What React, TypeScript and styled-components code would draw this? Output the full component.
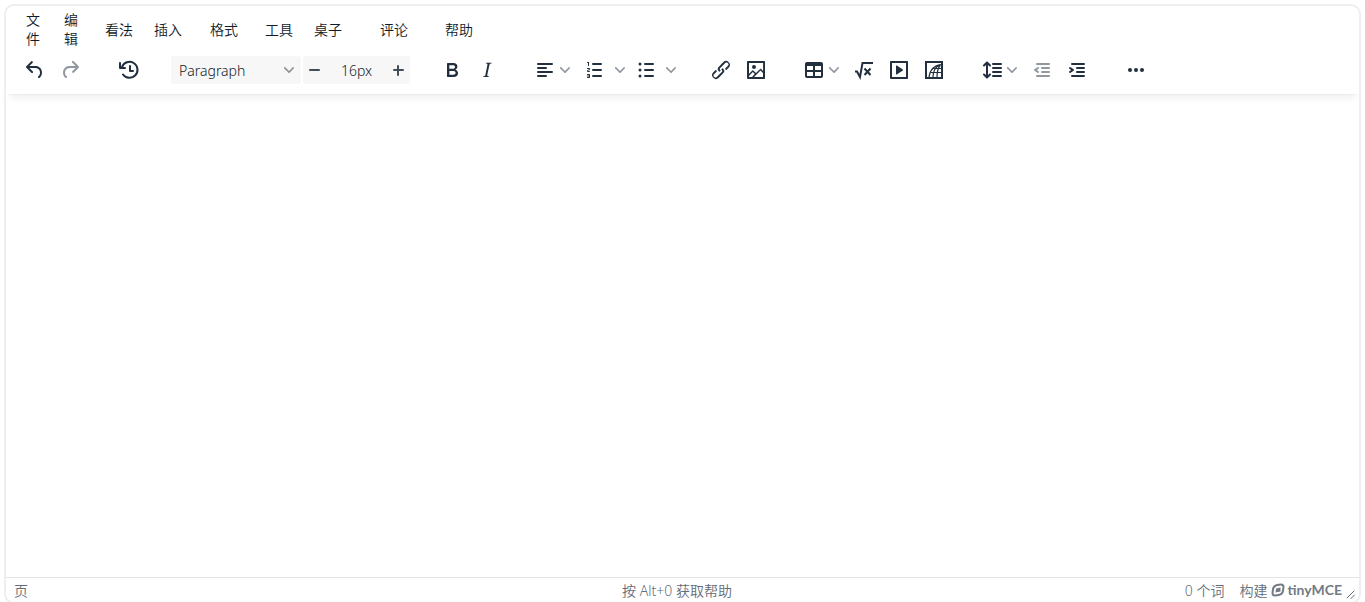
import React from "react";
import styled, { createGlobalStyle, css } from "styled-components";

const INK = "#222f3e";
const MUTED = "#636d78";

const GlobalStyle = createGlobalStyle`
  * { box-sizing: border-box; }
  body {
    margin: 0;
    background: #fff;
    color: ${INK};
    font: 350 14px/19px "Noto Sans", "Noto Sans CJK SC", sans-serif;
    overflow: hidden;
  }
`;

const Editor = styled.main`
  display: flex;
  flex-direction: column;
  height: calc(100vh - 2px);
  margin: 4px 4px 0;
  border: 2px solid #eee;
  border-radius: 10px;
  background: #fff;
  overflow: hidden;
`;

const Header = styled.header`
  position: relative;
  box-shadow: 0 2px 2px -2px rgba(34, 47, 62, 0.1), 0 8px 8px -4px rgba(34, 47, 62, 0.07);
`;

const MenuBar = styled.nav`
  display: flex;
  gap: 1px;
  padding: 4px 12px;
`;

const buttonReset = css`
  border: 0;
  border-radius: 3px;
  background: transparent;
  color: ${INK};
  font: inherit;
  cursor: pointer;
`;

const MenuButton = styled.button<{ $width: number }>`
  ${buttonReset}
  flex: none;
  width: ${(p) => p.$width}px;
  padding: 0 8px;
  color: #111c28;
  text-align: left;
`;

const ToolBar = styled.div`
  display: flex;
  gap: 25px;
  padding: 4px 12px 10px;
`;

const Group = styled.div<{ $gap?: number }>`
  display: flex;
  gap: ${(p) => p.$gap ?? 1}px;
`;

const ToolButton = styled.button`
  ${buttonReset}
  display: flex;
  align-items: center;
  justify-content: center;
  width: 34px;
  height: 28px;
  padding: 0;

  &:disabled { color: rgba(34, 47, 62, 0.5); cursor: default; }
`;

const MenuToolButton = styled(ToolButton)`
  justify-content: flex-start;
  gap: 3px;
  width: 48px;
  padding-left: 4px;
`;

const Split = styled.div`
  display: flex;
`;

const SplitArrow = styled(ToolButton)`
  width: 16px;
`;

const SelectBox = styled.div`
  position: relative;
  width: 130px;
  height: 28px;
  border-radius: 3px;
  background: #f7f7f7;

  svg { position: absolute; right: 7px; top: 9px; pointer-events: none; }
`;

const fieldText = css`
  height: 28px;
  border: 0;
  background: transparent;
  color: #111c28;
  font: inherit;
`;

const BlockSelect = styled.select`
  ${fieldText}
  appearance: none;
  width: 100%;
  padding: 1px 20px 0 8px;
`;

const NumberBox = styled.div`
  display: flex;
  align-items: center;
  width: 107px;
  height: 28px;
  border-radius: 3px;
  background: #f7f7f7;
`;

const StepButton = styled(ToolButton)`
  width: 23px;
  color: rgba(34, 47, 62, 0.85);
`;

const SizeInput = styled.input`
  ${fieldText}
  flex: 1;
  min-width: 0;
  padding: 1px 0 0;
  text-align: center;
`;

const EditArea = styled.div`
  flex: 1;
  padding: 16px;
  outline: none;
`;

const StatusBar = styled.footer`
  display: flex;
  align-items: center;
  height: 25px;
  padding: 1px 3px 0 8px;
  border-top: 1px solid #e3e3e3;
  color: ${MUTED};
`;

const StatusSide = styled.div<{ $end?: boolean }>`
  display: flex;
  flex: 1;
  align-items: center;
  justify-content: ${(p) => (p.$end ? "flex-end" : "flex-start")};
  gap: 15px;
`;

const HelpText = styled.span`
  padding-right: 16px;
`;

const Brand = styled.a`
  display: flex;
  align-items: center;
  gap: 4px;
  color: ${MUTED};
  text-decoration: none;
`;

const BrandMark = styled.span`
  display: flex;
  align-items: center;
  gap: 2px;
  height: 19px;
  padding-bottom: 2px;
  color: #737b84;
  font: 700 14px/16px Lato, sans-serif;
`;

const Tail = styled.div`
  display: flex;
  gap: 4px;
`;

const Grip = styled.svg`
  align-self: flex-end;
`;

const Chevron = () => (
  <svg width="10" height="10" fill={INK} fillOpacity=".5" aria-hidden="true">
    <path d="M8.7 2.2c.3-.3.8-.3 1 0 .4.4.4.9 0 1.2L5.7 7.8c-.3.3-.9.3-1.2 0L.2 3.4a.8.8 0 0 1 0-1.2c.3-.3.8-.3 1.1 0L5 6l3.7-3.8Z" />
  </svg>
);

const icons: Record<string, React.ReactNode> = {
  undo: <path d="M6.4 8H12c3.7 0 6.2 2 6.8 5.1.6 2.7-.4 5.6-2.3 6.8a1 1 0 0 1-1-1.8c1.1-.6 1.8-2.7 1.4-4.6-.5-2.1-2.1-3.5-4.9-3.5H6.4l3.3 3.3a1 1 0 1 1-1.4 1.4l-5-5a1 1 0 0 1 0-1.4l5-5a1 1 0 0 1 1.4 1.4L6.4 8Z" />,
  redo: <path d="M17.6 10H12c-2.8 0-4.4 1.4-4.9 3.5-.4 2 .3 4 1.4 4.6a1 1 0 1 1-1 1.8c-2-1.2-2.9-4.1-2.3-6.8.6-3 3-5.1 6.8-5.1h5.6l-3.3-3.3a1 1 0 1 1 1.4-1.4l5 5a1 1 0 0 1 0 1.4l-5 5a1 1 0 0 1-1.4-1.4l3.3-3.3Z" />,
  history: (
    <g fill="none" stroke="currentColor" strokeWidth="2" strokeLinecap="round" strokeLinejoin="round">
      <path d="M6 16.500A8 8 0 1 0 5 9M3 5v5h5M13 8v5h3" />
    </g>
  ),
  bold: <path fillRule="evenodd" d="M7.8 19c-.3 0-.5 0-.6-.2l-.2-.5V5.7c0-.2 0-.4.2-.5l.6-.2h5c1.5 0 2.7.3 3.5 1 .7.6 1.1 1.4 1.1 2.5a3 3 0 0 1-.6 1.9c-.4.6-1 1-1.6 1.2.4.1.9.3 1.3.6s.8.7 1 1.2c.4.4.5 1 .5 1.6 0 1.3-.4 2.3-1.3 3-.8.7-2.1 1-3.8 1H7.8Zm5-8.3c.6 0 1.2-.1 1.6-.5.4-.3.6-.7.6-1.3 0-1.1-.8-1.7-2.3-1.7H9.3v3.5h3.4Zm.5 6c.7 0 1.3-.1 1.7-.4.4-.4.6-.9.6-1.5s-.2-1-.7-1.4c-.4-.3-1-.4-2-.4H9.4v3.8h4Z" />,
  italic: <path d="m16.7 4.7-.1.9h-.3c-.6 0-1 0-1.4.3-.3.3-.4.6-.5 1.1l-2.1 9.8v.6c0 .5.4.8 1.4.8h.2l-.2.8H8l.2-.8h.2c1.1 0 1.8-.5 2-1.500l2-9.8.1-.5c0-.6-.4-.8-1.4-.8h-.3l.2-.9h5.8Z" />,
  align: <path d="M5 5h14a1 1 0 0 1 0 2H5a1 1 0 1 1 0-2Zm0 4h8a1 1 0 0 1 0 2H5a1 1 0 1 1 0-2Zm0 8h8a1 1 0 0 1 0 2H5a1 1 0 0 1 0-2Zm0-4h14a1 1 0 0 1 0 2H5a1 1 0 0 1 0-2Z" />,
  ordered: <path d="M10 17h8a1 1 0 0 1 0 2h-8a1 1 0 0 1 0-2Zm0-6h8a1 1 0 0 1 0 2h-8a1 1 0 0 1 0-2Zm0-6h8a1 1 0 0 1 0 2h-8a1 1 0 1 1 0-2ZM6 4v3.5c0 .3-.2.5-.5.5a.5.5 0 0 1-.5-.5V5h-.5a.5.5 0 0 1 0-1H6Zm-1 8.8.2.2h1.3c.3 0 .5.2.5.5s-.2.5-.5.5H4.9a1 1 0 0 1-.9-1V13c0-.4.3-.8.6-1l1.2-.4.2-.3a.2.2 0 0 0-.2-.2H4.5a.5.5 0 0 1-.5-.5c0-.3.2-.5.5-.5h1.6c.5 0 .9.4.9 1v.1c0 .4-.3.8-.6 1l-1.2.4-.2.3ZM7 17v2c0 .6-.4 1-1 1H4.5a.5.5 0 0 1 0-1h1.2c.2 0 .3-.1.3-.3 0-.2-.1-.3-.3-.3H4.4a.4.4 0 1 1 0-.8h1.3c.2 0 .3-.1.3-.3 0-.2-.1-.3-.3-.3H4.5a.5.5 0 1 1 0-1H6c.6 0 1 .4 1 1Z" />,
  unordered: (
    <>
      <path d="M11 5h8a1 1 0 0 1 0 2h-8a1 1 0 0 1 0-2Zm0 6h8a1 1 0 0 1 0 2h-8a1 1 0 0 1 0-2Zm0 6h8a1 1 0 0 1 0 2h-8a1 1 0 0 1 0-2Z" />
      <circle cx="6" cy="6" r="1.5" /><circle cx="6" cy="12" r="1.5" /><circle cx="6" cy="18" r="1.5" />
    </>
  ),
  link: <path d="M6.2 12.3a1 1 0 0 1 1.4 1.4l-2 2a2 2 0 1 0 2.6 2.8l4.8-4.8a1 1 0 0 0 0-1.4 1 1 0 1 1 1.4-1.3 2.9 2.9 0 0 1 0 4L9.6 20a3.9 3.9 0 0 1-5.5-5.5l2-2Zm11.6-.6a1 1 0 0 1-1.4-1.4l2-2a2 2 0 1 0-2.6-2.8L11 10.3a1 1 0 0 0 0 1.4A1 1 0 1 1 9.6 13a2.9 2.9 0 0 1 0-4L14.4 4a3.9 3.9 0 0 1 5.5 5.5l-2 2Z" />,
  image: <path fillRule="evenodd" d="m5 15.7 3.3-3.2c.3-.3.7-.3 1 0L12 15l4.1-4c.3-.4.8-.4 1 0l2 1.9V5H5v10.7ZM5 18V19h3l2.8-2.9-2-2L5 17.9Zm14-3-2.5-2.4-6.4 6.5H19v-4ZM4 3h16c.6 0 1 .4 1 1v16c0 .6-.4 1-1 1H4a1 1 0 0 1-1-1V4c0-.6.4-1 1-1Zm6 8a2 2 0 1 0 0-4 2 2 0 0 0 0 4Z" />,
  table: <path fillRule="evenodd" d="M19 4a2 2 0 0 1 2 2v12a2 2 0 0 1-2 2H5a2 2 0 0 1-2-2V6c0-1.1.9-2 2-2h14ZM5 14v4h6v-4H5Zm14 0h-6v4h6v-4Zm0-6h-6v4h6V8ZM5 12h6V8H5v4Z" />,
  formula: (
    <g fill="none" stroke="currentColor" strokeWidth="2">
      <path d="M3 13.500h2l3 5.500L10.500 5H21" />
      <path d="m12.500 10.500 6 6.500M18.500 10.500l-6 6.500" />
    </g>
  ),
  media: <path fillRule="evenodd" d="M4 3h16c.6 0 1 .4 1 1v16c0 .6-.4 1-1 1H4a1 1 0 0 1-1-1V4c0-.6.4-1 1-1Zm1 2v14h14V5H5Zm4.800 2.600 6 4a.5.5 0 0 1 0 .8l-6 4A.5.5 0 0 1 9 16V8a.5.5 0 0 1 .8-.4Z" />,
  graph: (
    <g fill="none" stroke="currentColor">
      <path d="M4 4h16v16H4z" strokeWidth="2" />
      <path d="M7 19C8 12 12 7 20 6.500M11 19c0-5 2.500-10 7-12M15 19c0-4 .8-9 3.500-12M8.500 14.500H19M11 10.500h8" strokeWidth="1.200" />
    </g>
  ),
  lineHeight: (
    <>
      <path d="M13 5h8a1 1 0 0 1 0 2h-8a1 1 0 0 1 0-2Zm0 4h8a1 1 0 0 1 0 2h-8a1 1 0 0 1 0-2Zm0 4h8a1 1 0 0 1 0 2h-8a1 1 0 0 1 0-2Zm0 4h8a1 1 0 0 1 0 2h-8a1 1 0 0 1 0-2Z" />
      <path d="M7 5v14M4 7.500l3-3 3 3M4 16.500l3 3 3-3" fill="none" stroke="currentColor" strokeWidth="2" strokeLinecap="round" strokeLinejoin="round" />
    </>
  ),
  outdent: <path d="M7 5h12a1 1 0 0 1 0 2H7a1 1 0 1 1 0-2Zm5 4h7a1 1 0 0 1 0 2h-7a1 1 0 0 1 0-2Zm0 4h7a1 1 0 0 1 0 2h-7a1 1 0 0 1 0-2Zm-5 4h12a1 1 0 0 1 0 2H7a1 1 0 0 1 0-2Zm1.600-3.800a1 1 0 0 1-1.200 1.600l-3-2a1 1 0 0 1 0-1.600l3-2a1 1 0 0 1 1.200 1.600L6.800 12l1.800 1.200Z" />,
  indent: <path d="M7 5h12a1 1 0 0 1 0 2H7a1 1 0 1 1 0-2Zm5 4h7a1 1 0 0 1 0 2h-7a1 1 0 0 1 0-2Zm0 4h7a1 1 0 0 1 0 2h-7a1 1 0 0 1 0-2Zm-5 4h12a1 1 0 0 1 0 2H7a1 1 0 0 1 0-2Zm-2.600-3.800L6.200 12l-1.800-1.200a1 1 0 0 1 1.200-1.600l3 2a1 1 0 0 1 0 1.600l-3 2a1 1 0 1 1-1.200-1.600Z" />,
  more: <><circle cx="6" cy="12" r="2" /><circle cx="12" cy="12" r="2" /><circle cx="18" cy="12" r="2" /></>,
};

const Icon = ({ name }: { name: string }) => (
  <svg width="24" height="24" fill="currentColor" aria-hidden="true">{icons[name]}</svg>
);

const Tool = ({ name, label, disabled }: { name: string; label: string; disabled?: boolean }) => (
  <ToolButton type="button" aria-label={label} disabled={disabled}><Icon name={name} /></ToolButton>
);

const MenuTool = ({ name, label }: { name: string; label: string }) => (
  <MenuToolButton type="button" aria-label={label}><Icon name={name} /><Chevron /></MenuToolButton>
);

const SplitTool = ({ name, label }: { name: string; label: string }) => (
  <Split>
    <Tool name={name} label={label} />
    <SplitArrow type="button" aria-label={label}><Chevron /></SplitArrow>
  </Split>
);

const menus: [string, number][] = [
  ["文件", 37], ["编辑", 40], ["看法", 48], ["插入", 55], ["格式", 54],
  ["工具", 48], ["桌子", 65], ["评论", 64], ["帮助", 44],
];

export default function App() {
  return (
    <>
      <GlobalStyle />
      <Editor>
        <Header>
          <MenuBar>
            {menus.map(([name, width]) => (
              <MenuButton key={name} type="button" $width={width}>{name}</MenuButton>
            ))}
          </MenuBar>
          <ToolBar role="toolbar">
            <Group>
              <Tool name="undo" label="Undo" />
              <Tool name="redo" label="Redo" disabled />
            </Group>
            <Group><Tool name="history" label="Revision history" /></Group>
            <Group $gap={2}>
              <SelectBox>
                <BlockSelect aria-label="Block format"><option>Paragraph</option></BlockSelect>
                <Chevron />
              </SelectBox>
              <NumberBox>
                <StepButton type="button" aria-label="Decrease font size">
                  <svg width="13" height="13" fill="none" stroke="currentColor" strokeWidth="2" strokeLinecap="round"><path d="M2 6h9" /></svg>
                </StepButton>
                <SizeInput aria-label="Font size" defaultValue="16px" />
                <StepButton type="button" aria-label="Increase font size">
                  <svg width="13" height="13" fill="none" stroke="currentColor" strokeWidth="2" strokeLinecap="round"><path d="M2 6h9M6 2v9" /></svg>
                </StepButton>
              </NumberBox>
            </Group>
            <Group>
              <Tool name="bold" label="Bold" />
              <Tool name="italic" label="Italic" />
            </Group>
            <Group>
              <MenuTool name="align" label="Align" />
              <SplitTool name="ordered" label="Numbered list" />
              <SplitTool name="unordered" label="Bullet list" />
            </Group>
            <Group>
              <Tool name="link" label="Link" />
              <Tool name="image" label="Image" />
            </Group>
            <Group>
              <MenuTool name="table" label="Table" />
              <Tool name="formula" label="Formula" />
              <Tool name="media" label="Media" />
              <Tool name="graph" label="Graph" />
            </Group>
            <Group>
              <MenuTool name="lineHeight" label="Line height" />
              <Tool name="outdent" label="Decrease indent" disabled />
              <Tool name="indent" label="Increase indent" />
            </Group>
            <Group><Tool name="more" label="More" /></Group>
          </ToolBar>
        </Header>
        <EditArea contentEditable suppressContentEditableWarning role="textbox" aria-label="Editor" />
        <StatusBar>
          <StatusSide>页</StatusSide>
          <HelpText>按 Alt+0 获取帮助</HelpText>
          <StatusSide $end>
            <span>0 个词</span>
            <Tail>
              <Brand href="#tiny">
                构建
                <BrandMark>
                  <svg width="14" height="14" fill="currentColor" fillRule="evenodd" aria-hidden="true">
                    <path d="M6 1 10 .5Q13.500.5 13.500 4L13 8q-.5 4-5 5L4 13.500Q.5 13.500.5 10L1 6Q1.500 2 6 1ZM6.500 3 10 2.500q1.500 0 1.500 1.500L11 7.500Q10.500 10.500 7.500 11L4 11.500q-1.500 0-1.500-1.500L3 6.500Q3.500 3.500 6.500 3ZM5 5.500 9.500 4.500V8.500L4.500 9.500Z" />
                  </svg>
                  tinyMCE
                </BrandMark>
              </Brand>
              <Grip width="10" height="10" fill="none" stroke="currentColor" strokeLinecap="round" aria-hidden="true">
                <path d="M1 8 8 1M5 8.500 8.500 5" />
              </Grip>
            </Tail>
          </StatusSide>
        </StatusBar>
      </Editor>
    </>
  );
}
